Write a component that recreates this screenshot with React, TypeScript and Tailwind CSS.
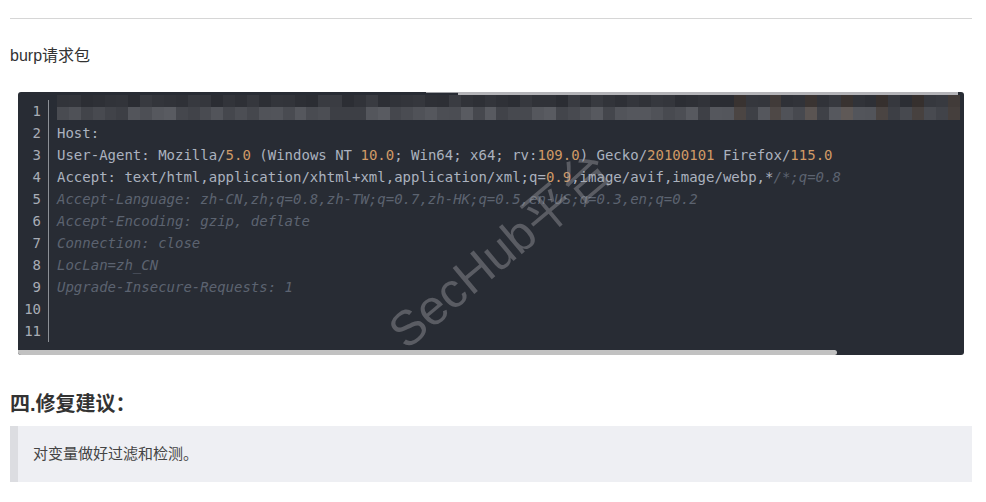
import React from 'react';

const mono = "font-['DejaVu_Sans_Mono',monospace]";
const cjk = "font-['Liberation_Sans','Noto_Sans_CJK_SC',sans-serif]";

// redacted first line: pseudo-random mosaic tiles
function tiles(seed: number, count: number, base: number, spread: number) {
  const out: string[] = [];
  let s = seed;
  for (let i = 0; i < count; i++) {
    s = (s * 9301 + 49297) % 233280;
    const r = s / 233280;
    const v = Math.round(base + r * spread);
    const warm = i > 56 && i % 3 === 0 ? 8 : 0;
    out.push(`rgb(${v + warm},${v + 2},${v + 8 - warm})`);
  }
  return out;
}

const topRow = tiles(7, 76, 42, 16);
const bottomRow = tiles(31, 76, 60, 30);

function Num({ children }: { children: React.ReactNode }) {
  return <span className="text-[#d19a66]">{children}</span>;
}

function Comment({ children }: { children: React.ReactNode }) {
  return <span className="italic text-[#5c6370]">{children}</span>;
}

const lines: React.ReactNode[] = [
  null,
  <>Host:</>,
  <>
    User-Agent: Mozilla/<Num>5.0</Num> (Windows NT <Num>10.0</Num>; Win64; x64; rv:<Num>109.0</Num>) Gecko/
    <Num>20100101</Num> Firefox/<Num>115.0</Num>
  </>,
  <>
    Accept: text/html,application/xhtml+xml,application/xml;q=<Num>0.9</Num>,image/avif,image/webp,*
    <Comment>/*;q=0.8</Comment>
  </>,
  <Comment>Accept-Language: zh-CN,zh;q=0.8,zh-TW;q=0.7,zh-HK;q=0.5,en-US;q=0.3,en;q=0.2</Comment>,
  <Comment>Accept-Encoding: gzip, deflate</Comment>,
  <Comment>Connection: close</Comment>,
  <Comment>LocLan=zh_CN</Comment>,
  <Comment>Upgrade-Insecure-Requests: 1</Comment>,
  null,
  null,
];

export default function App() {
  return (
    <div className={`min-h-screen bg-white px-[10px] pt-[18px] ${cjk} text-[#333]`}>
      <hr className="border-0 border-t border-[#d6d6d6] mr-[4px]" />

      <p className="mt-[25px] text-[16px] leading-[24px]">burp请求包</p>

      {/* code block */}
      <div className="relative mt-[24px] ml-[8px] mr-[12px] rounded-[3px] bg-[#282c34] pt-[8px] overflow-hidden">
        <div className="absolute top-0 left-[408px] w-[32px] h-[1px] bg-[#9fa0a4]" />
        <div className="absolute top-0 left-[440px] w-[500px] h-[3px] bg-[#b4b4b8]" />

        <div className={`flex ${mono} text-[14px] leading-[22px] text-[#abb2bf]`}>
          <div className="w-[31px] shrink-0 pr-[7px] text-right text-[#a8adb6] border-r border-[#8c9096]">
            {lines.map((_, i) => (
              <div key={i} className="h-[22px]">
                {i + 1}
              </div>
            ))}
          </div>
          <div className="flex-1 pl-[8px] whitespace-pre">
            {lines.map((l, i) =>
              i === 0 ? (
                <div key={i} className="relative h-[22px]">
                  <div className="absolute -top-[5px] left-0 right-[4px] flex flex-col">
                    <div className="flex h-[12px]">
                      {topRow.map((c, j) => (
                        <div key={j} className="h-full flex-1" style={{ backgroundColor: c }} />
                      ))}
                    </div>
                    <div className="flex h-[13px]">
                      {bottomRow.map((c, j) => (
                        <div key={j} className="h-full flex-1" style={{ backgroundColor: c }} />
                      ))}
                    </div>
                  </div>
                </div>
              ) : (
                <div key={i} className="h-[22px]">
                  {l}
                </div>
              )
            )}
          </div>
        </div>

        {/* horizontal scrollbar */}
        <div className="mt-[8px] h-[5px] w-[819px] rounded-r-[3px] bg-[#c1c1c1]" />

        {/* watermark */}
        <span
          className={`pointer-events-none absolute left-[346px] top-[134px] -rotate-[40deg] whitespace-nowrap text-[49px] leading-none text-[rgba(165,165,170,0.4)] ${cjk}`}
        >
          SecHub平台
        </span>
      </div>

      <h2 className="mt-[35px] text-[20px] font-bold leading-[28px] text-[#333]">四.修复建议：</h2>

      <div className="mt-[8px] mr-[4px] flex border-l-[8px] border-[#dcdde1] bg-[#eeeff3] h-[56px] items-center pl-[15px] text-[15px] text-[#444]">
        对变量做好过滤和检测。
      </div>
    </div>
  );
}
